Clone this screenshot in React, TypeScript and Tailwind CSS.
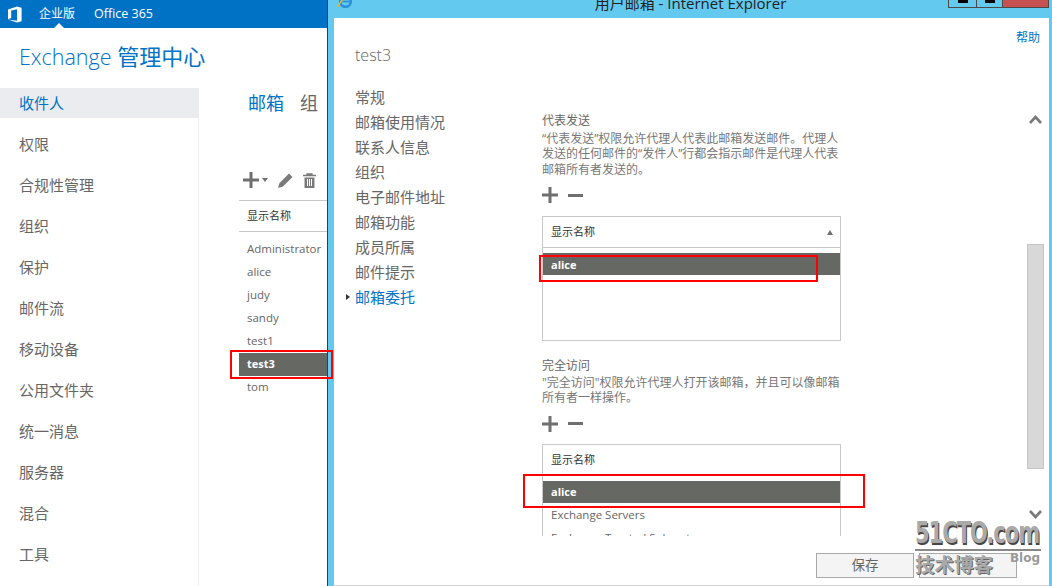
const font = `font-['Open_Sans','Noto_Sans_CJK_SC',sans-serif]`

const sideItems = ["权限", "合规性管理", "组织", "保护", "邮件流", "移动设备", "公用文件夹", "统一消息", "服务器", "混合", "工具"]
const users = ["Administrator", "alice", "judy", "sandy", "test1", "test3", "tom"]
const tabs = ["常规", "邮箱使用情况", "联系人信息", "组织", "电子邮件地址", "邮箱功能", "成员所属", "邮件提示", "邮箱委托"]

function OfficeLogo() {
  return (
    <svg width="16" height="17" viewBox="0 0 16 17" className="shrink-0">
      <path d="M1 3.4 10 .5l4.6 1.3v13.4L10 16.5 1 13.6l9 1.1V3.3L4.2 4.6v7.4L1 13.3z" fill="#fff" />
    </svg>
  )
}

function IeLogo() {
  return (
    <svg width="17" height="17" viewBox="0 0 16 16" className="shrink-0">
      <circle cx="8" cy="8" r="5" fill="none" stroke="#2a8fd8" strokeWidth="2.4" />
      <path d="M5 8h7" stroke="#2a8fd8" strokeWidth="1.6" />
      <path d="M1 13C3 7 9 2 14 1" fill="none" stroke="#e8b923" strokeWidth="1.3" />
    </svg>
  )
}

function PlusIcon() {
  return (
    <svg width="16" height="16" viewBox="0 0 16 16" className="shrink-0">
      <path d="M6.5 0h3v6.5H16v3H9.5V16h-3V9.5H0v-3h6.5z" fill="#6f6f6f" />
    </svg>
  )
}

function PlusMinus() {
  return (
    <div className="flex items-center gap-[10px]">
      <PlusIcon />
      <div className="w-[15px] h-[3px] bg-[#6f6f6f]" />
    </div>
  )
}

function Chevron({ up }: { up?: boolean }) {
  return (
    <svg width="13" height="9" viewBox="0 0 13 9" className={up ? "" : "rotate-180"}>
      <path d="M1 8l5.5-6L12 8" fill="none" stroke="#7a7a7a" strokeWidth="2.6" />
    </svg>
  )
}

function RedBox({ className }: { className: string }) {
  return <div className={`absolute border-[2px] border-[#ff0000] z-10 ${className}`} />
}

function PickerHead({ sort }: { sort?: boolean }) {
  return (
    <div className="h-[31px] flex items-center justify-between pl-[8px] pr-[7px] text-[11px] text-[#333] border-b border-[#c8c8c8]">
      <span>显示名称</span>
      {sort && <span className="w-0 h-0 border-x-[3.5px] border-x-transparent border-b-[5px] border-b-[#707070]" />}
    </div>
  )
}

export default function App() {
  return (
    <div className={`relative flex w-[1052px] h-[586px] overflow-hidden bg-white ${font}`}>
      {/* EAC page behind the popup */}
      <div className="w-[327px] shrink-0 flex flex-col">
        <div className="relative h-[28px] bg-[#0072c6] flex items-center pl-[7px] text-white text-[12px]">
          <OfficeLogo />
          <span className="ml-[16px]">企业版</span>
          <span className="ml-[19px] text-[12.5px]">Office 365</span>
          <span className="absolute left-[54px] bottom-0 w-0 h-0 border-x-[5px] border-x-transparent border-b-[5px] border-b-white" />
        </div>
        <div className="h-[60px] pl-[19px] pt-[13px] text-[22px] leading-[30px] text-[#0072c6]">
          <span className="font-light text-[21.5px]">Exchange</span> 管理中心
        </div>
        <div className="flex flex-1">
          <div className="w-[199px] shrink-0 border-r border-[#ececec] text-[15px] text-[#666]">
            <div className="h-[30px] bg-[#eaecf0] pl-[19px] leading-[30px] text-[#0072c6]">收件人</div>
            <div className="flex flex-col gap-[20px] pt-[16px] pl-[19px]">
              {sideItems.map((s) => (
                <div key={s} className="h-[21px] leading-[21px]">{s}</div>
              ))}
            </div>
          </div>
          <div className="flex-1 pl-[40px] overflow-hidden">
            <div className="pl-[9px] pt-[2px] flex gap-[16px] text-[18px] leading-[26px]">
              <span className="text-[#0072c6]">邮箱</span>
              <span className="text-[#666]">组</span>
            </div>
            <div className="flex items-center gap-[9px] pl-[4px] mt-[53px] h-[22px]">
              <PlusIcon />
              <span className="-ml-[6px] w-0 h-0 border-x-[3.5px] border-x-transparent border-t-[4px] border-t-[#707070]" />
              <svg width="17" height="17" viewBox="0 0 17 17">
                <path d="M12 1.5l3.5 3.5L6 14.5 1 16l1.5-5z" fill="#7a7a7a" />
              </svg>
              <svg width="13" height="15" viewBox="0 0 13 15">
                <path d="M0 2.5h13M4 2.5V1h5v1.5" fill="none" stroke="#7a7a7a" strokeWidth="1.3" />
                <path d="M1.5 4.5h10V15h-10z" fill="#7a7a7a" />
                <path d="M4.5 6v7M6.5 6v7M8.5 6v7" stroke="#fff" />
              </svg>
            </div>
            <div className="mt-[9px] h-[32px] border-y border-[#c8c8c8] pl-[8px] leading-[29px] text-[11px] text-[#333]">显示名称</div>
            <div className="pt-[6px] text-[11.5px] text-[#666]">
              {users.map((u) => (
                <div
                  key={u}
                  className={`h-[23px] leading-[22px] pl-[8px] ${u === "test3" ? "bg-[#666864] text-white font-bold text-[11px]" : ""}`}
                >
                  {u}
                </div>
              ))}
            </div>
          </div>
        </div>
      </div>

      {/* IE popup window */}
      <div className="flex-1 flex flex-col border-l border-[#24415a] bg-[#63c9ee] pl-[6px] pr-[3px]">
        <div className="relative h-[18px] shrink-0 overflow-hidden">
          <div className="absolute left-[3px] -top-[7px]"><IeLogo /></div>
          <div className="absolute left-0 right-0 -top-[7px] text-center text-[15px] leading-[20px] pr-[2px] text-[#222] whitespace-nowrap">
            用户邮箱 - Internet Explorer
          </div>
          <div className="absolute right-[0px] top-0 flex h-[8px] border border-t-0 border-[#4a4a4a]">
            <div className="w-[28px] border-r border-[#4a4a4a] flex justify-center"><div className="w-[10px] h-[3px] bg-black" /></div>
            <div className="w-[26px] border-r border-[#4a4a4a] flex justify-center"><div className="w-[10px] h-[3px] bg-black" /></div>
            <div className="w-[45px] bg-[#c75050]" />
          </div>
        </div>
        <div className="relative flex-1 min-h-0 bg-white flex border-b border-[#d4d4d4]">
          <div className="w-[208px] shrink-0 pl-[21px] text-[15px] text-[#666]">
            <div className="pt-[25px] h-[67px] text-[16px] leading-[24px] font-light">test3</div>
            <div className="flex flex-col">
              {tabs.map((t) => (
                <div key={t} className={`relative h-[25px] leading-[24px] ${t === "邮箱委托" ? "text-[#0072c6]" : ""}`}>
                  {t === "邮箱委托" && (
                    <span className="absolute -left-[9px] top-[9px] w-0 h-0 border-y-[3.5px] border-y-transparent border-l-[4px] border-l-[#333]" />
                  )}
                  {t}
                </div>
              ))}
            </div>
          </div>
          <div className="w-[299px] shrink-0 h-[518px] overflow-hidden text-[12px] leading-[15.5px] text-[#777]">
            <div className="pt-[95px] text-[#666]">代表发送</div>
            <p className="mt-[2px] w-[300px]">“代表发送”权限允许代理人代表此邮箱发送邮件。代理人发送的任何邮件的“发件人”行都会指示邮件是代理人代表邮箱所有者发送的。</p>
            <div className="mt-[10px] mb-[13px]"><PlusMinus /></div>
            <div className="h-[125px] border border-[#c8c8c8]">
              <PickerHead sort />
              <div className="mt-[5px] h-[22px] leading-[24px] pl-[8px] bg-[#666864] text-white text-[11px] font-bold">alice</div>
            </div>
            <div className="mt-[17px] text-[#666]">完全访问</div>
            <p className="mt-[1px]">"完全访问"权限允许代理人打开该邮箱，并且可以像邮箱所有者一样操作。</p>
            <div className="mt-[10px] mb-[12px]"><PlusMinus /></div>
            <div className="h-[125px] border border-[#c8c8c8]">
              <PickerHead />
              <div className="mt-[5px] h-[22px] leading-[22px] pl-[8px] bg-[#666864] text-white text-[11px] font-bold">alice</div>
              <div className="h-[23px] leading-[23px] pl-[8px] text-[11.5px] text-[#666]">Exchange Servers</div>
              <div className="h-[23px] leading-[23px] pl-[8px] text-[11.5px] text-[#666]">Exchange Trusted Subsystem</div>
            </div>
          </div>
          <div className="ml-[186px] w-[17px] shrink-0 flex flex-col items-center pt-[97px] h-[505px]">
            <Chevron up />
            <div className="mt-[120px] w-[17px] h-[225px] bg-[#d8d8d8] border border-[#c4c4c4]" />
            <div className="mt-[41px]"><Chevron /></div>
          </div>
          <div className="absolute right-[9px] top-[12px] text-[12px] leading-[16px] text-[#0072c6]">帮助</div>
          <div className="absolute right-[32px] bottom-[7px] flex gap-[5px] text-[13.5px] text-[#666]">
            <div className="w-[98px] h-[25px] border border-[#a8a8a8] bg-[#f4f4f4] text-center leading-[22px]">保存</div>
            <div className="w-[98px] h-[25px] border border-[#a8a8a8] bg-[#f4f4f4]" />
          </div>
        </div>
      </div>

      {/* 51CTO watermark */}
      <div className="absolute left-[915px] top-[518px] w-[126px] text-[#a9a9a9] z-20 font-['DejaVu_Sans','Noto_Sans_CJK_SC',sans-serif] font-bold">
        <div className="h-[30px] text-[21px] leading-[30px] tracking-[-1px] [text-shadow:1px_1px_0_#444] whitespace-nowrap origin-center scale-y-[1.45]">51CTO.com</div>
        <div className="h-[2px] bg-[#888] mt-[1px]" />
        <div className="flex justify-between items-start">
          <span className="text-[19.5px] leading-[26px] font-['Noto_Sans_CJK_SC',sans-serif] [text-shadow:1px_1px_0_#666]">技术博客</span>
          <span className="text-[12px] leading-[16px] text-[#999] mr-[1px] -mt-[1px]">Blog</span>
        </div>
      </div>

      {/* red annotation boxes */}
      <RedBox className="left-[230px] top-[350px] w-[103px] h-[29px]" />
      <RedBox className="left-[539px] top-[255px] w-[279px] h-[27px]" />
      <RedBox className="left-[523px] top-[474px] w-[342px] h-[34px]" />
    </div>
  )
}
